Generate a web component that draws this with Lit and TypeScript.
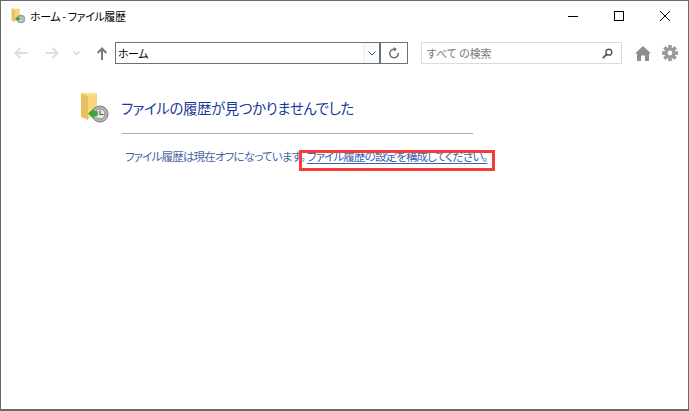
import { LitElement, html, css } from "lit";
import { customElement } from "lit/decorators.js";

@customElement("app-root")
export class AppRoot extends LitElement {
  static styles = css`
    :host {
      display: block;
      width: 689px;
      height: 411px;
      box-sizing: border-box;
      background: #fff;
      border: 1px solid #6a6a6a;
      border-width: 1px 1px 2px 1px;
      overflow: hidden;
      position: relative;
      font-family: "Noto Sans CJK JP", "Noto Sans", sans-serif;
      font-feature-settings: "palt";
      color: #000;
    }
    svg { display: block; flex: none; }
    .title {
      display: flex;
      align-items: center;
      height: 30px;
      padding-left: 10px;
      font-size: 11px;
    }
    .title-text { margin-left: 3px; letter-spacing: -0.4px; white-space: nowrap; }
    .controls { margin-left: auto; display: flex; }
    .ctl { width: 46px; height: 30px; display: flex; align-items: center; justify-content: center; }
    .toolbar {
      display: flex;
      align-items: center;
      height: 22px;
      margin-top: 11px;
      padding-left: 13px;
    }
    .nav-f { margin-left: 17px; }
    .nav-c { margin-left: 14px; }
    .nav-u { margin-left: 17px; }
    .addr {
      margin-left: 8px;
      width: 293px;
      height: 22px;
      box-sizing: border-box;
      border: 1px solid #6f6f6f;
      display: flex;
      align-items: stretch;
    }
    .addr-text { flex: 1; font-size: 11px; line-height: 20px; padding-left: 2px; letter-spacing: -0.5px; }
    .drop {
      width: 15px;
      background: #f8fbfd;
      border-left: 1px solid #e6eef4;
      border-right: 2px solid #6f6f6f;
      display: flex;
      align-items: center;
      justify-content: center;
    }
    .refresh { width: 26px; display: flex; align-items: center; justify-content: center; }
    .search {
      margin-left: 13px;
      width: 201px;
      height: 22px;
      box-sizing: border-box;
      border: 1px solid #dcdcdc;
      display: flex;
      align-items: center;
      padding: 0 8px 0 4px;
      color: #7a7a7a;
      font-size: 11px;
      font-feature-settings: normal;
    }
    .search span { flex: 1; white-space: nowrap; letter-spacing: -0.3px; }
    .home { margin-left: 13px; }
    .gear { margin-left: 11px; }
    .main {
      display: flex;
      padding: 28px 0 0 79px;
    }
    .body { margin-left: 10px; width: 351px; }
    .heading {
      font-size: 14.5px;
      line-height: 22px;
      margin: 5px 0 0 -1px;
      color: #1b3a9c;
      letter-spacing: -0.45px;
      white-space: nowrap;
    }
    .rule { height: 1px; background: #acacac; margin-top: 14px; }
    .info {
      margin-top: 13px;
      padding-left: 3px;
      font-size: 11.5px;
      line-height: 18px;
      color: #4a64a4;
      white-space: nowrap;
      letter-spacing: -0.82px;
    }
    .info a {
      color: #3b63ad;
      text-decoration: underline;
      text-underline-offset: 2px;
      margin-left: 2px;
      letter-spacing: -0.85px;
    }
    .mark {
      position: absolute;
      left: 298px;
      top: 149px;
      width: 196px;
      height: 21px;
      box-sizing: border-box;
      border: 3px solid #f53b3b;
    }
  `;

  render() {
    const folder = (s: number) => html`
      <svg width=${s} height=${s} viewBox="0 0 32 32">
        <path d="M1 1 H17 V20 H8 Z" fill="#fae08e"/>
        <path d="M8 4 L17 2 V20 L8 27 Z" fill="#f7d679"/>
        <path d="M1 1 L8 4 V28 L1 25 Z" fill="#e8c05f"/>
        <circle cx="20" cy="22" r="8" fill="#b5b5b5" stroke="#7c7c7c"/>
        <circle cx="20" cy="22" r="5" fill="#e8e8e8" stroke="#8d8d8d"/>
        <path d="M20 18.5 V22.5 H23.5" fill="none" stroke="#555" stroke-width="1.2"/>
        <path d="M8.5 21.5 L13.5 17 V19.5 H17.5 V23.5 H13.5 V26.5 Z" fill="#3aa52f" stroke="#2c8a26" stroke-width=".5"/>
      </svg>`;
    return html`
      <div class="title">
        ${folder(16)}
        <span class="title-text">ホーム - ファイル履歴</span>
        <div class="controls">
          <div class="ctl"><svg width="10" height="10"><path d="M0 5.5H10" stroke="#000"/></svg></div>
          <div class="ctl"><svg width="10" height="10"><rect x=".5" y=".5" width="9" height="9" fill="none" stroke="#000"/></svg></div>
          <div class="ctl"><svg width="10" height="10"><path d="M0 0L10 10M10 0L0 10" stroke="#000"/></svg></div>
        </div>
      </div>
      <div class="toolbar">
        <svg width="14" height="12" viewBox="0 0 14 12"><path d="M13.5 6H2M6.5 1L1.5 6L6.5 11" fill="none" stroke="#dedede" stroke-width="2"/></svg>
        <svg class="nav-f" width="14" height="12" viewBox="0 0 14 12"><path d="M.5 6H12M7.5 1L12.5 6L7.5 11" fill="none" stroke="#dedede" stroke-width="2"/></svg>
        <svg class="nav-c" width="7" height="5" viewBox="0 0 7 5"><path d="M.5 .5L3.5 3.5L6.5 .5" fill="none" stroke="#d0d0d0" stroke-width="1.2"/></svg>
        <svg class="nav-u" width="10" height="13" viewBox="0 0 10 13"><path d="M5 13V2M.7 6L5 1.5L9.3 6" fill="none" stroke="#7a7a7a" stroke-width="2"/></svg>
        <div class="addr">
          <span class="addr-text">ホーム</span>
          <div class="drop"><svg width="8" height="5" viewBox="0 0 8 5"><path d="M.5 .5L4 4L7.5 .5" fill="none" stroke="#555" stroke-width="1"/></svg></div>
          <div class="refresh"><svg width="12" height="12" viewBox="0 0 12 12"><path d="M6.5 2.2A4.3 4.3 0 1 0 10.3 6" fill="none" stroke="#6e6e6e" stroke-width="1.5"/><path d="M5.8 0L9 2.2L5.8 4.6Z" fill="#6e6e6e"/></svg></div>
        </div>
        <div class="search">
          <span>すべて の検索</span>
          <svg width="11" height="11" viewBox="0 0 12 12"><circle cx="7.5" cy="4.5" r="3.2" fill="none" stroke="#555" stroke-width="1.5"/><path d="M5 7L1 11" stroke="#555" stroke-width="2"/></svg>
        </div>
        <svg class="home" width="16" height="15" viewBox="0 0 16 15"><path d="M8 0L16 7.5H14V15H10V9.5H6V15H2V7.5H0Z" fill="#8e8e8e"/></svg>
        <svg class="gear" width="16" height="16" viewBox="0 0 16 16"><g fill="#9a9a9a"><rect x="6.2" y="0" width="3.6" height="16"/><rect x="0" y="6.2" width="16" height="3.6"/><rect x="6.2" y="0" width="3.6" height="16" transform="rotate(45 8 8)"/><rect x="0" y="6.2" width="16" height="3.6" transform="rotate(45 8 8)"/><circle cx="8" cy="8" r="5.6"/></g><circle cx="8" cy="8" r="2.4" fill="#fff"/></svg>
      </div>
      <div class="main">
        ${folder(32)}
        <div class="body">
          <div class="heading">ファイルの履歴が見つかりませんでした</div>
          <div class="rule"></div>
          <div class="info">ファイル履歴は現在オフになっています。<a href="#">ファイル履歴の設定を構成してください。</a></div>
        </div>
      </div>
      <div class="mark"></div>
    `;
  }
}
